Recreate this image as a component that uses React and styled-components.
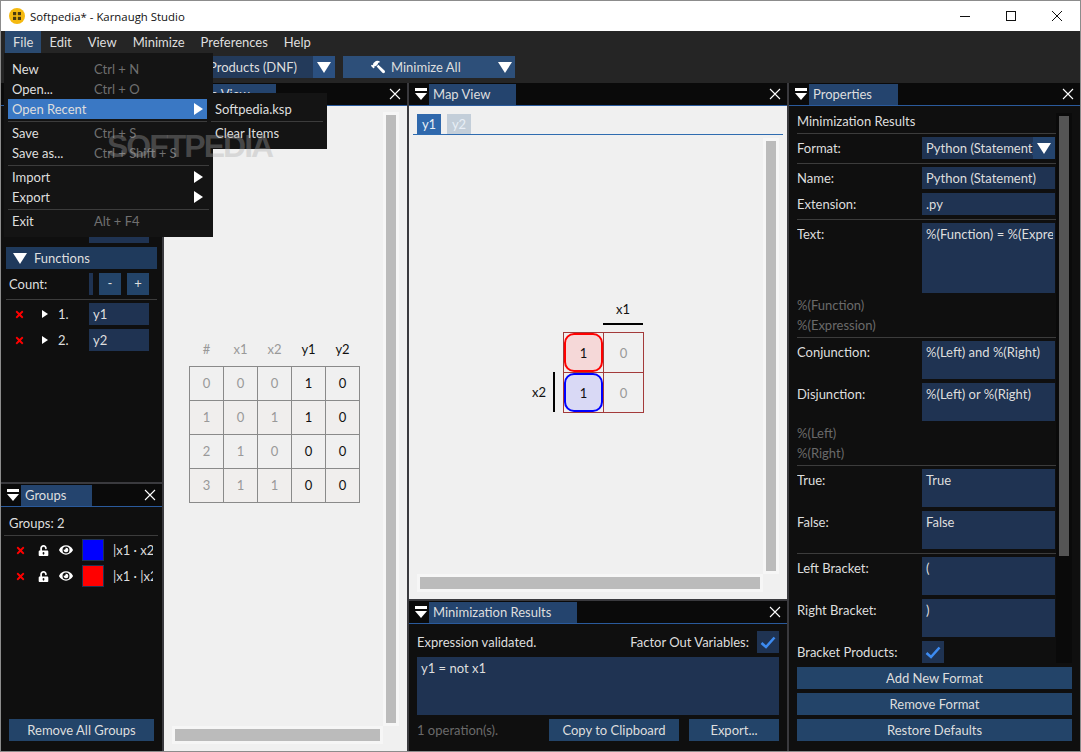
import React from "react";
import styled, { createGlobalStyle } from "styled-components";
import { FaTimes, FaUnlockAlt, FaEye, FaHammer } from "react-icons/fa";

const GlobalStyle = createGlobalStyle`
  html, body { margin: 0; padding: 0; background: #0f0f0f; }
  * { box-sizing: border-box; }
`;

const Grip = () => (
  <GripIcon width="12" height="14" viewBox="0 0 12 14">
    <rect x="0" y="1" width="12" height="3" fill="#fff" />
    <polygon points="0,6 12,6 6,13" fill="#fff" />
  </GripIcon>
);

const Close = () => (
  <CloseIcon width="12" height="12" viewBox="0 0 12 12">
    <path d="M1 1 L11 11 M11 1 L1 11" stroke="#fff" strokeWidth="1.1" />
  </CloseIcon>
);

const Down = () => (
  <svg width="14" height="11" viewBox="0 0 14 11">
    <polygon points="0,0 14,0 7,11" fill="#fff" />
  </svg>
);

const Right = () => (
  <svg width="9" height="12" viewBox="0 0 9 12">
    <polygon points="0,0 9,6 0,12" fill="#fff" />
  </svg>
);

const Check = () => (
  <svg width="16" height="13" viewBox="0 0 16 13">
    <path d="M1.5 7 L6 11 L14.5 1.5" fill="none" stroke="#3d8bf0" strokeWidth="2.6" />
  </svg>
);

const PanelHead = ({ title, last }) => (
  <Head $last={last}>
    <Grip />
    <Tab>{title}</Tab>
    <Close />
  </Head>
);

const tableRows = [
  [0, 0, 0, 1, 0],
  [1, 0, 1, 1, 0],
  [2, 1, 0, 0, 0],
  [3, 1, 1, 0, 0],
];

const menuItems = [
  { label: "New", keys: "Ctrl + N" },
  { label: "Open...", keys: "Ctrl + O" },
  { label: "Open Recent", active: true, arrow: true },
  { line: true },
  { label: "Save", keys: "Ctrl + S" },
  { label: "Save as...", keys: "Ctrl + Shift + S" },
  { line: true },
  { label: "Import", arrow: true },
  { label: "Export", arrow: true },
  { line: true },
  { label: "Exit", keys: "Alt + F4" },
];

const Field = ({ label, value, $h }) => (
  <PropRow>
    <PropLabel>{label}</PropLabel>
    <Input $w={133} $h={$h}>{value}</Input>
  </PropRow>
);

const App = () => {
  return (
    <Win>
      <GlobalStyle />
      <TitleBar>
        <AppIcon width="16" height="16" viewBox="0 0 16 16">
          <circle cx="8" cy="8" r="8" fill="#f5b90f" />
          <rect x="4" y="4" width="3.2" height="3.2" fill="#4a3a10" />
          <rect x="8.8" y="4" width="3.2" height="3.2" fill="#4a3a10" />
          <rect x="4" y="8.8" width="3.2" height="3.2" fill="#4a3a10" />
          <rect x="8.8" y="8.8" width="3.2" height="3.2" fill="#4a3a10" />
        </AppIcon>
        <TitleText>Softpedia* - Karnaugh Studio</TitleText>
        <WinButtons>
          <svg width="12" height="12" viewBox="0 0 12 12">
            <path d="M1 6.5 H11" stroke="#111" strokeWidth="1" />
          </svg>
          <svg width="12" height="12" viewBox="0 0 12 12">
            <rect x="1.5" y="1.5" width="9" height="9" fill="none" stroke="#111" strokeWidth="1" />
          </svg>
          <svg width="12" height="12" viewBox="0 0 12 12">
            <path d="M1 1 L11 11 M11 1 L1 11" stroke="#111" strokeWidth="1" />
          </svg>
        </WinButtons>
      </TitleBar>

      <MenuBar>
        <MenuTitle $open>File</MenuTitle>
        <MenuTitle>Edit</MenuTitle>
        <MenuTitle>View</MenuTitle>
        <MenuTitle>Minimize</MenuTitle>
        <MenuTitle>Preferences</MenuTitle>
        <MenuTitle>Help</MenuTitle>
      </MenuBar>

      <Toolbar>
        <Combo>
          <ComboText>Sum of Products (DNF)</ComboText>
          <ArrowBox><Down /></ArrowBox>
        </Combo>
        <MinimizeBtn>
          <FaHammer size={14} color="#fff" style={{ transform: "scaleX(-1)" }} />
          <span>Minimize All</span>
          <MinArrow><Down /></MinArrow>
        </MinimizeBtn>
      </Toolbar>

      <Dock>
        <LeftCol>
          <LeftTop>
            <PanelHead title="Inputs" />
            <LeftBody>
              <CountRow>
                <Input $w={60} $h={22} />
              </CountRow>
              <SectionHead>
                <Down />
                <span>Functions</span>
              </SectionHead>
              <CountRow>
                <Label>Count:</Label>
                <CountSliver />
                <SmallBtn>-</SmallBtn>
                <SmallBtn>+</SmallBtn>
              </CountRow>
              <Rule />
              <FuncRow>
                <FaTimes size={11} color="#f00" />
                <FuncArrow />
                <FuncNum>1.</FuncNum>
                <Input $w={60} $h={22}>y1</Input>
              </FuncRow>
              <FuncRow>
                <FaTimes size={11} color="#f00" />
                <FuncArrow />
                <FuncNum>2.</FuncNum>
                <Input $w={60} $h={22}>y2</Input>
              </FuncRow>
            </LeftBody>
          </LeftTop>
          <LeftBottom>
            <PanelHead title="Groups" />
            <GroupsBody>
              <GroupsCount>Groups: 2</GroupsCount>
              <Rule />
              <GroupRow>
                <FaTimes size={11} color="#f00" />
                <FaUnlockAlt size={11} color="#fff" />
                <FaEye size={14} color="#fff" />
                <Swatch $color="#0000ff" />
                <GroupText>|x1 · x2</GroupText>
              </GroupRow>
              <GroupRow>
                <FaTimes size={11} color="#f00" />
                <FaUnlockAlt size={11} color="#fff" />
                <FaEye size={14} color="#fff" />
                <Swatch $color="#ff0000" />
                <GroupText>|x1 · |x2</GroupText>
              </GroupRow>
              <RemoveGroups>Remove All Groups</RemoveGroups>
            </GroupsBody>
          </LeftBottom>
        </LeftCol>

        <CenterCol>
          <PanelHead title="Table View" />
          <TableCanvas>
            <TableWrap>
              <TruthTable>
                <thead>
                  <tr>
                    <HeadCell>#</HeadCell>
                    <HeadCell>x1</HeadCell>
                    <HeadCell>x2</HeadCell>
                    <HeadCell $out>y1</HeadCell>
                    <HeadCell $out>y2</HeadCell>
                  </tr>
                </thead>
                <tbody>
                  {tableRows.map((row, i) => (
                    <BodyRow key={row[0]} $odd={i % 2 === 1}>
                      {row.map((v, j) => (
                        <BodyCell key={j} $out={j > 2}>{v}</BodyCell>
                      ))}
                    </BodyRow>
                  ))}
                </tbody>
              </TruthTable>
            </TableWrap>
            <VTrack><Thumb /></VTrack>
            <HTrack><Thumb /></HTrack>
          </TableCanvas>
        </CenterCol>

        <MapCol>
          <MapTop>
            <PanelHead title="Map View" />
            <MapTabs>
              <MapTab $active>y1</MapTab>
              <MapTab>y2</MapTab>
            </MapTabs>
            <MapCanvas>
              <MapWrap>
                <KMap>
                  <span />
                  <span />
                  <TopVar>x1</TopVar>
                  <span />
                  <MapCell>
                    <Mark $color="#ff0000" $bg="#f5d8d8">1</Mark>
                  </MapCell>
                  <MapCell $zero>0</MapCell>
                  <SideVar>
                    <span>x2</span>
                    <SideBar />
                  </SideVar>
                  <MapCell>
                    <Mark $color="#0000ff" $bg="#d9d9f5">1</Mark>
                  </MapCell>
                  <MapCell $zero>0</MapCell>
                </KMap>
              </MapWrap>
              <VTrack><Thumb /></VTrack>
              <HTrack><Thumb /></HTrack>
            </MapCanvas>
          </MapTop>
          <ResultsPanel>
            <PanelHead title="Minimization Results" />
            <ResultsBody>
              <ResultsTop>
                <ResultsStatus>Expression validated.</ResultsStatus>
                <FactorLabel>Factor Out Variables:</FactorLabel>
                <CheckBox><Check /></CheckBox>
              </ResultsTop>
              <Output>y1 = not x1</Output>
              <ResultsBottom>
                <Muted>1 operation(s).</Muted>
                <Btn $w={130}>Copy to Clipboard</Btn>
                <Btn $w={90}>Export...</Btn>
              </ResultsBottom>
            </ResultsBody>
          </ResultsPanel>
        </MapCol>

        <RightCol>
          <PanelHead title="Properties" last />
          <PropsBody>
            <PropsScroll>
              <PropsList>
                <PropTitle>Minimization Results</PropTitle>
                <Rule />
                <PropRow>
                  <PropLabel>Format:</PropLabel>
                  <FormatCombo>
                    <FormatText>Python (Statement)</FormatText>
                    <FormatArrow><Down /></FormatArrow>
                  </FormatCombo>
                </PropRow>
                <Rule />
                <Field label="Name:" value="Python (Statement)" $h={22} />
                <Field label="Extension:" value=".py" $h={22} />
                <Rule />
                <Field label="Text:" value="%(Function) = %(Expression)" $h={70} />
                <Hint $top={-2}>%(Function)</Hint>
                <Hint $bottom={2}>%(Expression)</Hint>
                <Rule />
                <Field label="Conjunction:" value="%(Left) and %(Right)" $h={38} />
                <Field label="Disjunction:" value="%(Left) or %(Right)" $h={38} />
                <Hint $top={-2}>%(Left)</Hint>
                <Hint $bottom={2}>%(Right)</Hint>
                <Rule />
                <Field label="True:" value="True" $h={38} />
                <Field label="False:" value="False" $h={38} />
                <Rule />
                <Field label="Left Bracket:" value="(" $h={38} />
                <Field label="Right Bracket:" value=")" $h={38} />
                <PropRow>
                  <PropLabel>Bracket Products:</PropLabel>
                  <CheckBox><Check /></CheckBox>
                </PropRow>
              </PropsList>
              <PropsTrack><PropsThumb /></PropsTrack>
            </PropsScroll>
            <PropButtons>
              <Btn>Add New Format</Btn>
              <Btn>Remove Format</Btn>
              <Btn>Restore Defaults</Btn>
            </PropButtons>
          </PropsBody>
        </RightCol>
      </Dock>

      <FileMenu>
        {menuItems.map((item, i) =>
          item.line ? (
            <MenuLine key={i} />
          ) : (
            <MenuItem key={i} $active={item.active}>
              <span>{item.label}</span>
              {item.keys && <Keys>{item.keys}</Keys>}
              {item.arrow && <ItemArrow><Right /></ItemArrow>}
            </MenuItem>
          )
        )}
      </FileMenu>
      <SubMenu>
        <MenuItem>Softpedia.ksp</MenuItem>
        <MenuLine />
        <MenuItem>Clear Items</MenuItem>
      </SubMenu>
      <Watermark>SOFTPEDIA</Watermark>
    </Win>
  );
};

const Win = styled.div`
  position: relative;
  width: 1081px;
  height: 752px;
  overflow: hidden;
  display: flex;
  flex-direction: column;
  outline: 1px solid #8c8c8c;
  outline-offset: -1px;
  font-family: Lato, sans-serif;
  font-size: 13px;
  color: #dedede;
  background: #3a3a3e;
`;

const TitleBar = styled.div`
  height: 31px;
  flex: none;
  display: flex;
  align-items: center;
  padding: 1px 0 0 9px;
  background: #fff;
`;

const AppIcon = styled.svg`
  flex: none;
`;

const TitleText = styled.span`
  margin-left: 5px;
  font-family: "Open Sans", sans-serif;
  font-size: 11.4px;
  color: #111;
`;

const WinButtons = styled.div`
  margin-left: auto;
  margin-right: 18px;
  display: flex;
  gap: 34px;
`;

const MenuBar = styled.div`
  height: 22px;
  flex: none;
  display: flex;
  padding-left: 5px;
  background: #252525;
`;

const MenuTitle = styled.div`
  padding: 0 8px;
  line-height: 22px;
  background: ${(p) => (p.$open ? "#2a4a70" : "transparent")};
`;

const Toolbar = styled.div`
  height: 30px;
  flex: none;
  display: flex;
  gap: 8px;
  padding: 3px 0 0 9px;
  background: #252525;
`;

const Combo = styled.div`
  width: 326px;
  height: 22px;
  display: flex;
  justify-content: flex-end;
  align-items: center;
  background: #233a5a;
`;

const ComboText = styled.span`
  margin-right: 16px;
`;

const ArrowBox = styled.div`
  width: 22px;
  height: 22px;
  display: flex;
  align-items: center;
  justify-content: center;
  background: #2b5080;
`;

const MinimizeBtn = styled.div`
  width: 172px;
  height: 22px;
  display: flex;
  align-items: center;
  gap: 6px;
  padding-left: 28px;
  background: #2d4f79;
`;

const MinArrow = styled.span`
  display: flex;
  margin-left: auto;
  margin-right: 3px;
`;

const Dock = styled.div`
  flex: 1;
  min-height: 0;
  display: flex;
  gap: 2px;
`;

const Head = styled.div`
  height: 23px;
  flex: none;
  display: flex;
  align-items: flex-end;
  padding: 0 ${(p) => (p.$last ? 1 : 0)}px 0 6px;
  background: #0a0a0a;
  border-bottom: 1px solid #2a5a9c;
`;

const GripIcon = styled.svg`
  flex: none;
  align-self: center;
`;

const CloseIcon = styled.svg`
  flex: none;
  align-self: center;
  margin-left: auto;
  margin-right: 6px;
`;

const Tab = styled.div`
  height: 21px;
  margin-left: 2px;
  padding: 0 26px 0 4px;
  line-height: 21px;
  background: #24446e;
`;

const LeftCol = styled.div`
  width: 162px;
  flex: none;
  display: flex;
  flex-direction: column;
  gap: 2px;
  padding-left: 1px;
`;

const LeftTop = styled.div`
  height: 399px;
  flex: none;
  display: flex;
  flex-direction: column;
  background: #0f0f0f;
`;

const LeftBody = styled.div`
  padding: 115px 5px 0 5px;
`;

const LeftBottom = styled.div`
  flex: 1;
  display: flex;
  flex-direction: column;
  background: #0f0f0f;
`;

const GroupsBody = styled.div`
  flex: 1;
  display: flex;
  flex-direction: column;
  padding: 6px 4px 11px 3px;
`;

const GroupsCount = styled.div`
  height: 22px;
  padding-left: 5px;
  line-height: 20px;
`;

const CountRow = styled.div`
  height: 22px;
  display: flex;
  align-items: center;
  justify-content: flex-end;
  gap: 6px;
  padding-right: 8px;
  margin-bottom: 4px;
`;

const SectionHead = styled.div`
  height: 22px;
  margin-bottom: 4px;
  display: flex;
  align-items: center;
  gap: 7px;
  padding-left: 7px;
  background: #1f3a5c;
`;

const Label = styled.span`
  margin-right: auto;
  padding-left: 3px;
`;

const CountSliver = styled.div`
  width: 4px;
  height: 22px;
  background: #1f3352;
`;

const SmallBtn = styled.div`
  width: 22px;
  height: 22px;
  text-align: center;
  line-height: 21px;
  background: #234469;
`;

const Rule = styled.div`
  height: 1px;
  flex: none;
  margin-bottom: 3px;
  background: #3c3c3c;
`;

const FuncRow = styled.div`
  height: 22px;
  margin-bottom: 4px;
  display: flex;
  align-items: center;
  padding-left: 8px;
`;

const FuncArrow = styled.span`
  margin-left: 17px;
  width: 0;
  height: 0;
  border-left: 6px solid #fff;
  border-top: 4px solid transparent;
  border-bottom: 4px solid transparent;
`;

const FuncNum = styled.span`
  margin-left: 10px;
  width: 31px;
`;

const Input = styled.div`
  width: ${(p) => p.$w}px;
  height: ${(p) => p.$h}px;
  flex: none;
  overflow: hidden;
  white-space: nowrap;
  padding-left: 4px;
  border-right: 2px solid #1f3352;
  line-height: 22px;
  background: #1f3352;
`;

const GroupRow = styled.div`
  height: 22px;
  margin-bottom: 4px;
  display: grid;
  grid-template-columns: 24px 22px 24px 26px 1fr;
  align-items: center;
  justify-items: center;
  padding-left: 4px;
  width: 149px;
`;

const Swatch = styled.div`
  justify-self: end;
  width: 22px;
  height: 22px;
  background: ${(p) => p.$color};
  border: 1px solid #1f3352;
`;

const GroupText = styled.div`
  justify-self: stretch;
  margin-left: 9px;
  overflow: hidden;
  white-space: nowrap;
`;

const Btn = styled.div`
  height: 22px;
  width: ${(p) => (p.$w ? `${p.$w}px` : "auto")};
  flex: none;
  text-align: center;
  line-height: 22px;
  background: #234469;
`;

const RemoveGroups = styled(Btn)`
  margin: auto 4px 0 5px;
`;

const CenterCol = styled.div`
  width: 243px;
  flex: none;
  display: flex;
  flex-direction: column;
`;

const TableCanvas = styled.div`
  flex: 1;
  min-height: 0;
  display: grid;
  grid-template-columns: 1fr 16px;
  grid-template-rows: 1fr 18px;
  padding: 6px 8px 8px 8px;
  background: #f0f0f0;
`;

const TableWrap = styled.div`
  padding: 220px 0 0 17px;
`;

const TruthTable = styled.table`
  border-collapse: collapse;
  table-layout: fixed;
  width: 171px;
  opacity: 0.999;
`;

const HeadCell = styled.th`
  height: 34px;
  padding: 0;
  font-weight: 400;
  text-align: center;
  color: ${(p) => (p.$out ? "#111" : "#999")};
`;

const BodyRow = styled.tr`
  background: ${(p) => (p.$odd ? "#f0eeed" : "#f0f0f0")};
`;

const BodyCell = styled.td`
  height: 34px;
  padding: 0;
  text-align: center;
  border: 1px solid #8a8a8a;
  color: ${(p) => (p.$out ? "#111" : "#999")};
`;

const VTrack = styled.div`
  padding: 3px;
  display: flex;
  background: #f6f6f6;
`;

const HTrack = styled.div`
  padding: 3px;
  display: flex;
  background: #f6f6f6;
`;

const Thumb = styled.div`
  flex: 1;
  background: #bbbbbb;
`;

const MapCol = styled.div`
  width: 378px;
  flex: none;
  display: flex;
  flex-direction: column;
  gap: 2px;
`;

const MapTop = styled.div`
  height: 516px;
  flex: none;
  display: flex;
  flex-direction: column;
  background: #f0f0f0;
`;

const MapTabs = styled.div`
  height: 29px;
  flex: none;
  display: flex;
  align-items: flex-end;
  gap: 6px;
  margin: 0 4px;
  padding-left: 4px;
  border-bottom: 1px solid #2f6cb0;
`;

const MapTab = styled.div`
  width: 24px;
  height: 20px;
  text-align: center;
  line-height: 20px;
  color: #e8eef6;
  background: ${(p) => (p.$active ? "#2f68ac" : "#c3ced9")};
`;

const MapCanvas = styled.div`
  flex: 1;
  min-height: 0;
  display: grid;
  grid-template-columns: 1fr 16px;
  grid-template-rows: 1fr 18px;
  padding: 3px 8px 7px 8px;
`;

const MapWrap = styled.div`
  padding: 162px 0 0 115px;
`;

const KMap = styled.div`
  display: grid;
  grid-template-columns: 31px 40px 40px;
  grid-template-rows: 32px 40px 40px;
`;

const TopVar = styled.div`
  height: 25px;
  text-align: center;
  line-height: 18px;
  color: #111;
  border-bottom: 2px solid #000;
`;

const MapCell = styled.div`
  width: 41px;
  height: 41px;
  display: flex;
  align-items: center;
  justify-content: center;
  border: 1px solid #a33a3a;
  color: ${(p) => (p.$zero ? "#999" : "#111")};
`;

const Mark = styled.div`
  width: 100%;
  height: 100%;
  display: flex;
  align-items: center;
  justify-content: center;
  border: 2px solid ${(p) => p.$color};
  border-radius: 10px;
  background: ${(p) => p.$bg};
`;

const SideVar = styled.div`
  display: flex;
  align-items: center;
  gap: 7px;
  color: #111;
`;

const SideBar = styled.div`
  width: 2px;
  height: 40px;
  background: #000;
`;

const ResultsPanel = styled.div`
  flex: 1;
  display: flex;
  flex-direction: column;
  background: #0f0f0f;
`;

const ResultsBody = styled.div`
  padding: 7px 8px 0 8px;
  display: flex;
  flex-direction: column;
  gap: 4px;
`;

const ResultsTop = styled.div`
  height: 22px;
  display: flex;
  align-items: center;
`;

const ResultsStatus = styled.span`
  margin-right: auto;
`;

const FactorLabel = styled.span`
  margin-right: 8px;
`;

const CheckBox = styled.div`
  width: 22px;
  height: 22px;
  flex: none;
  display: flex;
  align-items: center;
  justify-content: center;
  background: #1f3352;
`;

const Output = styled.div`
  height: 58px;
  padding: 3px 4px;
  background: #1f3352;
`;

const ResultsBottom = styled.div`
  height: 22px;
  display: flex;
  align-items: center;
  gap: 10px;
`;

const Muted = styled.span`
  margin-right: auto;
  color: #6a6a6a;
`;

const RightCol = styled.div`
  flex: 1;
  min-width: 0;
  display: flex;
  flex-direction: column;
  background: #0f0f0f;
`;

const PropsBody = styled.div`
  flex: 1;
  min-height: 0;
  padding: 7px 9px 0 8px;
  display: flex;
  flex-direction: column;
`;

const PropsScroll = styled.div`
  height: 551px;
  flex: none;
  display: flex;
  overflow: hidden;
`;

const PropsList = styled.div`
  width: 259px;
  flex: none;
  display: flex;
  flex-direction: column;
`;

const PropTitle = styled.div`
  height: 20px;
  flex: none;
  line-height: 17px;
`;

const PropRow = styled.div`
  display: flex;
  flex: none;
  margin-bottom: 4px;
`;

const PropLabel = styled.div`
  width: 125px;
  flex: none;
  line-height: 22px;
`;

const FormatCombo = styled.div`
  width: 133px;
  height: 22px;
  display: flex;
  background: #1f3352;
`;

const FormatText = styled.div`
  flex: 1;
  min-width: 0;
  overflow: hidden;
  white-space: nowrap;
  padding-left: 4px;
  line-height: 22px;
`;

const FormatArrow = styled.div`
  width: 22px;
  flex: none;
  display: flex;
  align-items: center;
  justify-content: center;
  background: #24446e;
`;

const Hint = styled.div`
  height: 20px;
  flex: none;
  margin-top: ${(p) => p.$top || 0}px;
  margin-bottom: ${(p) => p.$bottom || 0}px;
  line-height: 20px;
  color: #6a6a6a;
`;

const PropsTrack = styled.div`
  width: 16px;
  padding: 3px;
  flex: none;
  height: 550px;
  background: #0a0a0a;
`;

const PropsThumb = styled.div`
  height: 440px;
  background: #555;
`;

const PropButtons = styled.div`
  margin-top: 3px;
  display: flex;
  flex-direction: column;
  gap: 4px;
`;

const FileMenu = styled.div`
  position: absolute;
  left: 4px;
  top: 53px;
  width: 209px;
  height: 184px;
  padding: 6px 4px;
  background: #141414;
`;

const SubMenu = styled.div`
  position: absolute;
  left: 207px;
  top: 93px;
  width: 120px;
  height: 56px;
  padding: 6px 4px;
  background: #141414;
`;

const MenuItem = styled.div`
  height: 20px;
  display: flex;
  align-items: center;
  padding-left: 4px;
  position: relative;
  background: ${(p) => (p.$active ? "#3a78c4" : "transparent")};
`;

const Keys = styled.span`
  position: absolute;
  left: 86px;
  color: #707070;
`;

const ItemArrow = styled.span`
  position: absolute;
  right: 6px;
  display: flex;
`;

const MenuLine = styled.div`
  height: 1px;
  margin: 2px 0 1px 0;
  background: #3c3c3c;
`;

const Watermark = styled.div`
  position: absolute;
  left: 107px;
  top: 128px;
  font-family: "Liberation Sans", sans-serif;
  font-weight: 700;
  font-size: 32px;
  letter-spacing: -2px;
  color: rgba(170, 170, 170, 0.35);
  pointer-events: none;
`;

export default App;
